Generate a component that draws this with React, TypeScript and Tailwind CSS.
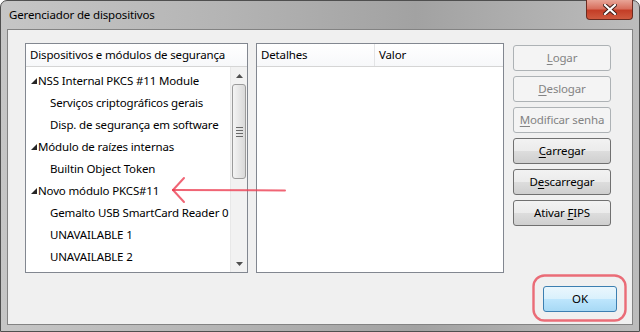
import React from 'react';

const font = "[font-family:'Noto_Sans','Open_Sans',sans-serif] text-[11.5px] tracking-[-0.15px]";

type Row = { label: string; parent?: boolean };

const rows: Row[] = [
  { label: 'NSS Internal PKCS #11 Module', parent: true },
  { label: 'Serviços criptográficos gerais' },
  { label: 'Disp. de segurança em software' },
  { label: 'Módulo de raízes internas', parent: true },
  { label: 'Builtin Object Token' },
  { label: 'Novo módulo PKCS#11', parent: true },
  { label: 'Gemalto USB SmartCard Reader 0' },
  { label: 'UNAVAILABLE 1' },
  { label: 'UNAVAILABLE 2' },
];

function Expander() {
  return (
    <svg width="6" height="6" viewBox="0 0 6 6" className="shrink-0">
      <polygon points="6,0 6,6 0,6" fill="#262626" />
    </svg>
  );
}

function Scrollbar() {
  return (
    <div className="w-[17px] h-full flex flex-col bg-[#f2f2f2] border-l border-[#e8e8e8]">
      <div className="h-[17px] flex items-center justify-center">
        <svg width="7" height="4" viewBox="0 0 7 4">
          <polygon points="3.5,0 7,4 0,4" fill="#505050" />
        </svg>
      </div>
      <div className="h-[95px] mx-px rounded-[3px] border border-[#9b9b9b] bg-gradient-to-r from-[#f4f4f4] to-[#d9d9d9] flex items-center justify-center">
        <div className="flex flex-col gap-[2px]">
          <div className="w-[7px] h-px bg-[#6a6a6a]" />
          <div className="w-[7px] h-px bg-[#6a6a6a]" />
          <div className="w-[7px] h-px bg-[#6a6a6a]" />
          <div className="w-[7px] h-px bg-[#6a6a6a]" />
        </div>
      </div>
      <div className="flex-1" />
      <div className="h-[17px] flex items-center justify-center">
        <svg width="7" height="4" viewBox="0 0 7 4">
          <polygon points="0,0 7,0 3.5,4" fill="#505050" />
        </svg>
      </div>
    </div>
  );
}

function Btn({ pre, key1, post, disabled }: { pre: string; key1: string; post: string; disabled?: boolean }) {
  const cls = disabled
    ? 'border-[#adb2b5] bg-[#f4f4f4] text-[#838383]'
    : 'border-[#707070] bg-[linear-gradient(#f2f2f2_0%,#ebebeb_50%,#dddddd_50%,#cfcfcf_100%)] text-black';
  return (
    <div className={`h-[26px] w-[98px] rounded-[3px] border flex items-center justify-center whitespace-nowrap ${cls}`}>
      <span>
        {pre}
        <span className="underline underline-offset-2">{key1}</span>
        {post}
      </span>
    </div>
  );
}

export default function App() {
  return (
    <div className={`w-[640px] h-[332px] relative overflow-hidden bg-white text-black ${font}`}>
      <div className="h-full flex flex-col rounded-t-[7px] border border-[#4f4f4f] bg-[linear-gradient(90deg,#c6c6c6_0%,#b4b4b4_35%,#a2a2a2_65%,#bcbcbc_100%)]">
        {/* Title bar */}
        <div className="h-[28px] flex items-center pl-[8px] text-black">
          Gerenciador de dispositivos
        </div>
        <div className="absolute top-0 right-[7px] w-[47px] h-[20px] rounded-b-[4px] border border-t-0 border-[#6b2b20] bg-[linear-gradient(#e8a597_0%,#d8705e_45%,#c43e27_55%,#cf5a3f_100%)] flex items-center justify-center">
          <svg width="14" height="11" viewBox="0 0 14 11">
            <path d="M2 1 L12 10 M12 1 L2 10" stroke="#3b1a14" strokeWidth="4" strokeLinecap="square" />
            <path d="M2 1 L12 10 M12 1 L2 10" stroke="#ffffff" strokeWidth="2.2" strokeLinecap="square" />
          </svg>
        </div>

        {/* Client area */}
        <div className="flex-1 px-[6px] pb-[6px] flex">
          <div className="flex-1 border border-[#838383] bg-[#f0f0f0] flex flex-col">
            <div className="flex pt-[13px] pl-[17px]">
              {/* Tree */}
              <div className="w-[223px] h-[230px] border border-[#828790] bg-white flex flex-col">
                <div className="h-[23px] flex items-center pl-[4px] border-b border-[#d5d5d5] bg-[linear-gradient(#ffffff,#f7f8fa)] whitespace-nowrap">
                  Dispositivos e módulos de segurança
                </div>
                <div className="flex flex-1 min-h-0">
                  <div className="flex-1 flex flex-col pt-[3px]">
                    {rows.map((r) => (
                      <div key={r.label} className={`h-[22px] flex items-center whitespace-nowrap ${r.parent ? 'pl-[5px] gap-px' : 'pl-[24px]'}`}>
                        {r.parent && <Expander />}
                        <span>{r.label}</span>
                      </div>
                    ))}
                  </div>
                  <Scrollbar />
                </div>
              </div>

              {/* Details */}
              <div className="ml-[8px] w-[248px] h-[230px] border border-[#828790] bg-white flex flex-col">
                <div className="h-[23px] flex border-b border-[#d5d5d5] bg-[linear-gradient(#ffffff,#f7f8fa)]">
                  <div className="w-[118px] flex items-center pl-[4px] border-r border-[#e3e4e6]">Detalhes</div>
                  <div className="flex-1 flex items-center pl-[4px]">Valor</div>
                </div>
              </div>

              {/* Buttons */}
              <div className="ml-[9px] mt-[2px] flex flex-col gap-[5px]">
                <Btn pre="" key1="L" post="ogar" disabled />
                <Btn pre="" key1="D" post="eslogar" disabled />
                <Btn pre="" key1="M" post="odificar senha" disabled />
                <Btn pre="" key1="C" post="arregar" />
                <Btn pre="D" key1="e" post="scarregar" />
                <Btn pre="Ativar " key1="F" post="IPS" />
              </div>
            </div>

            <div className="flex-1" />

            <div className="flex justify-end pr-[15px] pb-[12px]">
              <div className="relative">
                <div className="w-[74px] h-[26px] rounded-[3px] border border-[#3c7fb1] bg-[linear-gradient(#eaf6fd_0%,#d9f0fc_50%,#bee6fd_50%,#a7d9f5_100%)] flex items-center justify-center">
                  OK
                </div>
                <svg className="absolute -left-[11px] -top-[12px] pointer-events-none" width="96" height="49" viewBox="0 0 96 49">
                  <rect x="1.5" y="1.5" width="92" height="45" rx="11" fill="none" stroke="#e8404f" strokeOpacity="0.75" strokeWidth="2.4" />
                </svg>
              </div>
            </div>
          </div>
        </div>
      </div>

      {/* Annotation arrow */}
      <svg className="absolute left-[170px] top-[175px] pointer-events-none" width="120" height="30" viewBox="0 0 120 30">
        <g stroke="#ec3f53" strokeOpacity="0.8" strokeWidth="2" fill="none" strokeLinecap="round">
          <path d="M3 15 L115 15.5" />
          <path d="M3 15 L14 3" />
          <path d="M3 15 L14 27" />
        </g>
      </svg>
    </div>
  );
}
